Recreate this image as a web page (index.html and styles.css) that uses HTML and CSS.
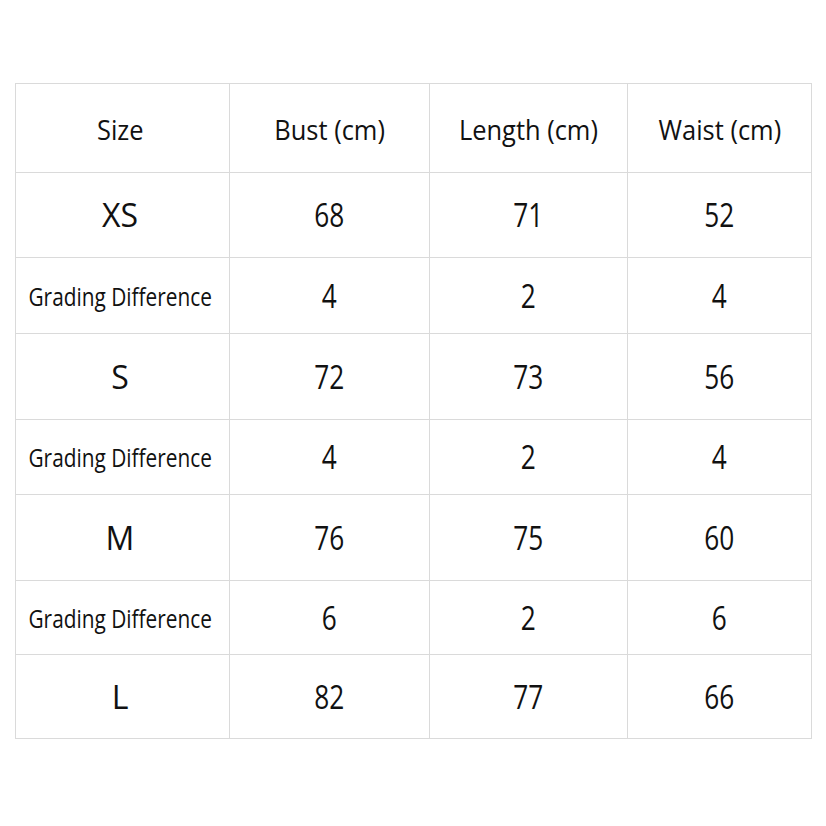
FILE: index.html
```html
<!DOCTYPE html>
<html>
<head>
<meta charset="utf-8">
<link rel="stylesheet" href="styles.css">
</head>
<body>
<div class="page">
<table class="sizes">
  <colgroup>
    <col class="c1"><col class="c2"><col class="c3"><col class="c4">
  </colgroup>
  <tr class="head r1"><td><span>Size</span></td><td><span>Bust (cm)</span></td><td><span>Length (cm)</span></td><td><span>Waist (cm)</span></td></tr>
  <tr class="size r2"><td><span>XS</span></td><td><span class="n">68</span></td><td><span class="n">71</span></td><td><span class="n">52</span></td></tr>
  <tr class="grade r3"><td><span class="gl">Grading Difference</span></td><td><span class="n">4</span></td><td><span class="n">2</span></td><td><span class="n">4</span></td></tr>
  <tr class="size r4"><td><span>S</span></td><td><span class="n">72</span></td><td><span class="n">73</span></td><td><span class="n">56</span></td></tr>
  <tr class="grade r5"><td><span class="gl">Grading Difference</span></td><td><span class="n">4</span></td><td><span class="n">2</span></td><td><span class="n">4</span></td></tr>
  <tr class="size r6"><td><span>M</span></td><td><span class="n">76</span></td><td><span class="n">75</span></td><td><span class="n">60</span></td></tr>
  <tr class="grade r7"><td><span class="gl">Grading Difference</span></td><td><span class="n">6</span></td><td><span class="n">2</span></td><td><span class="n">6</span></td></tr>
  <tr class="size r8"><td><span>L</span></td><td><span class="n">82</span></td><td><span class="n">77</span></td><td><span class="n">66</span></td></tr>
</table>
</div>
</body>
</html>
```
FILE: styles.css
```css
html, body { margin: 0; padding: 0; background: #fff; }
.page { padding: 83px 0 0 15px; }
.sizes {
  border-collapse: collapse;
  table-layout: fixed;
  width: 796px;
  font-family: "Open Sans", "Noto Sans", sans-serif;
  color: #111;
}
.c1 { width: 214px; }
.c2 { width: 200px; }
.c3 { width: 198px; }
.c4 { width: 184px; }
.sizes td {
  border: 1px solid #dadada;
  text-align: center;
  vertical-align: middle;
  padding: 0;
  white-space: nowrap;
  line-height: 1;
}
.sizes td:first-child { padding-right: 5px; }
.sizes td span { display: inline-block; }
.r1 td { height: 84px; padding-top: 4px; }
.r2 td { height: 84px; }
.r3 td { height: 75px; }
.r4 td { height: 85px; }
.r5 td { height: 74px; }
.r6 td { height: 85px; }
.r7 td { height: 73px; }
.r8 td { height: 83px; }
.grade td:first-child { padding-bottom: 4px; }
.r3 td:first-child { height: 71px; }
.r5 td:first-child { height: 70px; }
.r7 td:first-child { height: 69px; }
.head td { font-size: 26.5px; }
.head span { transform: scaleX(0.96); }
.size td, .grade td { font-size: 32px; }
.sizes span.n { transform: scaleX(0.82); }
.sizes span.gl { font-size: 24.8px; transform: scaleX(0.84); margin: 0 -30px; }
```
